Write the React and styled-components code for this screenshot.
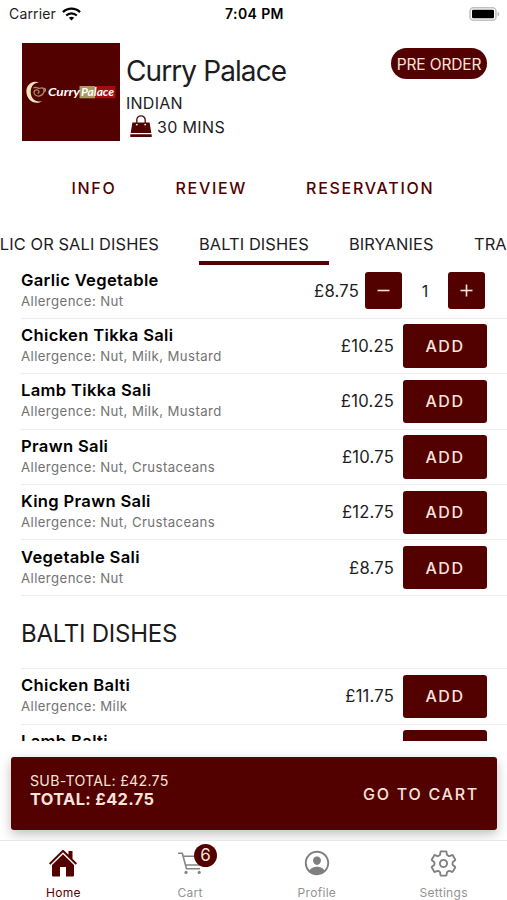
import React from 'react';
import styled, { createGlobalStyle } from 'styled-components';
import { IoPersonCircleOutline, IoSettingsOutline } from 'react-icons/io5';

const maroon = '#520000';
const cream = '#fbe3da';

const GlobalStyle = createGlobalStyle`
  * {
    box-sizing: border-box;
  }
  body {
    margin: 0;
    background: #fff;
    color: #1c1c1e;
    font-family: Inter, "Liberation Sans", sans-serif;
  }
  button {
    font-family: inherit;
    border: none;
    padding: 0;
    cursor: pointer;
  }
`;

const Screen = styled.div`
  display: flex;
  flex-direction: column;
  width: 507px;
  height: 900px;
  overflow: hidden;
  white-space: nowrap;
`;

const StatusBar = styled.div`
  display: grid;
  grid-template-columns: 1fr auto 1fr;
  align-items: center;
  height: 27px;
  padding: 0 7px 0 9px;
  font-size: 14px;
`;

const Carrier = styled.div`
  display: flex;
  align-items: center;
  gap: 6px;
  letter-spacing: 0.15px;
`;

const Clock = styled.div`
  font-weight: 600;
  letter-spacing: 0.4px;
  color: #000;
`;

const Battery = styled.svg`
  justify-self: end;
`;

const Header = styled.header`
  display: flex;
  align-items: flex-start;
  height: 130px;
  padding: 16px 20px 0 22px;
`;

const Info = styled.div`
  flex: 1;
  padding: 11px 0 0 6px;
  font-size: 16px;
  line-height: 24px;
`;

const Title = styled.h1`
  margin: 0 0 2px;
  font-size: 28px;
  line-height: 35px;
  font-weight: 400;
  letter-spacing: -0.9px;
`;

const Cuisine = styled.div`
  letter-spacing: 0.25px;
`;

const Delivery = styled.div`
  display: flex;
  align-items: center;
  gap: 5px;
  height: 23px;
  padding-left: 4px;
  letter-spacing: 0.35px;
`;

const PreOrder = styled.button`
  width: 96px;
  height: 31px;
  margin-top: 5px;
  padding-top: 1px;
  border-radius: 16px;
  background: ${maroon};
  color: ${cream};
  font-size: 15.5px;
  letter-spacing: -0.15px;
`;

const Links = styled.nav`
  display: flex;
  gap: 59px;
  height: 62px;
  padding-left: 71.5px;
  align-items: center;
  color: ${maroon};
  font-size: 16px;
  font-weight: 500;
  letter-spacing: 1.7px;
`;

const Tabs = styled.div`
  display: flex;
  height: 46px;
  gap: 20px;
  margin-left: -21px;
  font-size: 16.4px;
  line-height: 50px;
  letter-spacing: 0.1px;
`;

const Tab = styled.div`
  display: flex;
  flex: none;
  justify-content: ${(p) => (p.$end ? 'flex-end' : 'flex-start')};
  width: ${(p) => p.$width}px;
  padding-right: ${(p) => (p.$end ? 20 : 0)}px;
  border-bottom: 4px solid ${(p) => (p.$active ? maroon : 'transparent')};
`;

const Menu = styled.main`
  height: 476px;
  padding-left: 21px;
  overflow: hidden;
`;

const Group = styled.section`
  margin-top: ${(p) => p.$offset || 0}px;
`;

const GroupTitle = styled.h2`
  height: 73.4px;
  margin: 0;
  border-bottom: 1px solid #ececec;
  font-size: 24px;
  line-height: 75px;
  font-weight: 400;
  letter-spacing: -0.25px;
`;

const Row = styled.div`
  display: flex;
  align-items: center;
  height: 55.4px;
  padding-right: ${(p) => (p.$counted ? 22 : 20)}px;
  border-bottom: 1px solid #ececec;
`;

const Dish = styled.div`
  flex: 1;
  padding-bottom: 2px;
`;

const DishName = styled.div`
  color: #000;
  font-size: 16.6px;
  line-height: 22px;
  font-weight: 600;
  letter-spacing: 0.33px;
`;

const Allergens = styled.div`
  color: #727272;
  font-size: 13.2px;
  line-height: 20px;
  letter-spacing: 0.42px;
`;

const Price = styled.div`
  margin-right: ${(p) => (p.$counted ? 6 : 9)}px;
  font-size: 16.6px;
  letter-spacing: 0.2px;
`;

const AddButton = styled.button`
  width: 84px;
  height: 43.5px;
  border-radius: 3px;
  background: ${maroon};
  color: ${cream};
  font-size: 16px;
  font-weight: 500;
  letter-spacing: 1.6px;
`;

const StepButton = styled.button`
  display: grid;
  place-items: center;
  width: 37px;
  height: 37px;
  border-radius: 3px;
  background: ${maroon};
`;

const Quantity = styled.div`
  width: 46px;
  text-align: center;
  font-size: 16px;
`;

const CartBar = styled.div`
  display: flex;
  flex: none;
  justify-content: space-between;
  height: 73px;
  margin: 16px 10px 10px 11px;
  padding: 0 18px 0 19px;
  border-radius: 3px;
  background: ${maroon};
  color: ${cream};
  box-shadow: 0 4px 12px rgba(0, 0, 0, 0.26);
`;

const Totals = styled.div`
  padding-top: 14px;
  font-size: 14.2px;
  line-height: 19px;
  letter-spacing: 0.25px;
`;

const Total = styled.div`
  font-size: 16.4px;
  font-weight: 700;
  letter-spacing: 0.35px;
`;

const GoToCart = styled.div`
  font-size: 16px;
  line-height: 74px;
  font-weight: 500;
  letter-spacing: 1.75px;
`;

const BottomNav = styled.nav`
  display: grid;
  grid-template-columns: repeat(4, 1fr);
  flex: 1;
  z-index: 1;
  border-top: 1px solid #e8e8e8;
  background: #fff;
`;

const NavItem = styled.div`
  display: flex;
  flex-direction: column;
  align-items: center;
  padding-top: 5px;
  color: ${(p) => (p.$active ? maroon : '#7f7f7f')};
  font-size: 12px;
  letter-spacing: 0.3px;
`;

const NavIcon = styled.div`
  position: relative;
  display: grid;
  place-items: center;
  width: 32px;
  height: 34px;
  margin-bottom: 5px;
`;

const NavLabel = styled.span`
  opacity: ${(p) => (p.$active ? 1 : 0.85)};
`;

const Badge = styled.span`
  position: absolute;
  top: -2px;
  left: 20px;
  width: 23px;
  height: 23px;
  border-radius: 50%;
  background: ${maroon};
  color: ${cream};
  font-size: 17px;
  line-height: 23px;
  text-align: center;
`;

const WifiIcon = () => (
  <svg width="19" height="14" viewBox="0 0 19 14" fill="none" stroke="#000" strokeWidth="2.3">
    <path d="M1 5.1C5.7.5 13.3.5 18 5.1" />
    <path d="M4.2 8.5c3-2.9 7.6-2.9 10.6 0" />
    <path d="M6.8 10.7c1.6-1.4 3.8-1.4 5.4 0L9.5 13.4z" fill="#000" stroke="none" />
  </svg>
);

const BatteryIcon = () => (
  <Battery width="31" height="14" viewBox="0 0 31 14">
    <rect x="1" y=".8" width="26" height="12.4" rx="3.5" fill="#fff" stroke="#c2c2c2" strokeWidth="1.6" />
    <rect x="3" y="2.7" width="22" height="8.6" rx="1.2" fill="#000" />
    <path d="M28.7 4.7c2 .8 2 3.8 0 4.6z" fill="#b5b5b5" />
  </Battery>
);

const Logo = () => (
  <svg width="98" height="98" viewBox="0 0 98 98">
    <rect width="98" height="98" fill={maroon} />
    <path d="M17.5 40C10 36 4 42.500 4.400 49c.4 8 8 13.500 15.800 9.200-7.300 1.600-11.300-3.200-11.500-9 0-5.500 3.300-10.400 8.800-9.200z" fill="#efe3c0" />
    <path d="M11.500 45c2.500-2 4.500 1 7 .2 2.700-1 4.200 1 3.200 4.300-1.500 4.200-7.500 4.800-9.300 1.500-1.200-2.500.8-4.800 3.300-4 2 .8 1.500 3.200-.2 3.300M21.500 45.500c3-.7 2.500 3-.3 4" fill="none" stroke="#a88a62" strokeWidth="1.300" />
    <rect x="57.500" y="43" width="15.500" height="12.300" fill="#aa9a61" />
    <rect x="73" y="43" width="20.500" height="12.300" fill="#a30d12" />
    <text x="26" y="53" textLength="32" lengthAdjust="spacingAndGlyphs" fill="#fff" fontFamily="Lato, sans-serif" fontSize="10.500" fontWeight="700" fontStyle="italic">Curry</text>
    <text x="59" y="53" textLength="33" lengthAdjust="spacingAndGlyphs" fill="#fff" fontFamily="Lato, sans-serif" fontSize="10.500" fontWeight="700" fontStyle="italic">Palace</text>
  </svg>
);

const BagIcon = () => (
  <svg width="22" height="24" viewBox="0 0 22 24" fill={maroon}>
    <path d="M2.400 7.500h17.200l1.700 10.500H.7zM.3 19.200h21.400V22H.3z" />
    <path d="M6.800 9.500V5a4.200 4.200 0 0 1 8.400 0v4.500" fill="none" stroke={maroon} strokeWidth="1.300" />
    <circle cx="6.800" cy="9.600" r=".9" fill="#fff" />
    <circle cx="15.200" cy="9.600" r=".9" fill="#fff" />
  </svg>
);

const HomeIcon = () => (
  <svg width="30" height="28" viewBox="0 0 30 28" fill={maroon}>
    <path d="M1 14.300 14.200 1.200a1.200 1.200 0 0 1 1.600 0L20.500 5.800V2h4v7.800L29 14.300l-1.300 1.400L15 3.200 2.300 15.700z" />
    <path d="M15 5.200 26 16v10.500a1 1 0 0 1-1 1h-7V18h-6v9.500H5a1 1 0 0 1-1-1V16z" />
  </svg>
);

const CartIcon = () => (
  <svg width="28" height="28" viewBox="0 0 28 28" fill="none" stroke="#858585" strokeWidth="1.600">
    <path d="M2 4.200h4.300l4.200 15.600H24" />
    <path d="M7.300 7.200h18.500l-2.300 8.800H9.600" />
    <circle cx="10" cy="23.400" r="1.600" fill="#858585" stroke="none" />
    <circle cx="23.200" cy="23.400" r="1.600" fill="#858585" stroke="none" />
  </svg>
);

const StepIcon = ({ plus }) => (
  <svg width="13" height="13" viewBox="0 0 13 13" stroke={cream} strokeWidth="1.600">
    <path d="M.5 6.500h12" />
    {plus && <path d="M6.500.5v12" />}
  </svg>
);

const saliDishes = [
  { name: 'Garlic Vegetable', allergens: 'Nut', price: '8.75', quantity: 1 },
  { name: 'Chicken Tikka Sali', allergens: 'Nut, Milk, Mustard', price: '10.25' },
  { name: 'Lamb Tikka Sali', allergens: 'Nut, Milk, Mustard', price: '10.25' },
  { name: 'Prawn Sali', allergens: 'Nut, Crustaceans', price: '10.75' },
  { name: 'King Prawn Sali', allergens: 'Nut, Crustaceans', price: '12.75' },
  { name: 'Vegetable Sali', allergens: 'Nut', price: '8.75' },
];

const baltiDishes = [
  { name: 'Chicken Balti', allergens: 'Milk', price: '11.75' },
  { name: 'Lamb Balti' },
];

function DishRow({ dish }) {
  const counted = dish.quantity > 0;
  return (
    <Row $counted={counted}>
      <Dish>
        <DishName>{dish.name}</DishName>
        <Allergens>{dish.allergens ? `Allergence: ${dish.allergens}` : '\u00a0'}</Allergens>
      </Dish>
      {dish.price && <Price $counted={counted}>£{dish.price}</Price>}
      {counted ? (
        <>
          <StepButton><StepIcon /></StepButton>
          <Quantity>{dish.quantity}</Quantity>
          <StepButton><StepIcon plus /></StepButton>
        </>
      ) : (
        <AddButton>{dish.price && 'ADD'}</AddButton>
      )}
    </Row>
  );
}

export default function App() {
  return (
    <Screen>
      <GlobalStyle />
      <StatusBar>
        <Carrier>Carrier <WifiIcon /></Carrier>
        <Clock>7:04 PM</Clock>
        <BatteryIcon />
      </StatusBar>
      <Header>
        <Logo />
        <Info>
          <Title>Curry Palace</Title>
          <Cuisine>INDIAN</Cuisine>
          <Delivery><BagIcon />30 MINS</Delivery>
        </Info>
        <PreOrder>PRE ORDER</PreOrder>
      </Header>
      <Links>
        <span>INFO</span>
        <span>REVIEW</span>
        <span>RESERVATION</span>
      </Links>
      <Tabs>
        <Tab $width={200} $end>LIC OR SALI DISHES</Tab>
        <Tab $width={130} $active>BALTI DISHES</Tab>
        <Tab $width={105}>BIRYANIES</Tab>
        <Tab $width={80}>TRA</Tab>
      </Tabs>
      <Menu>
        <Group $offset={-1.5}>
          {saliDishes.map((dish) => <DishRow key={dish.name} dish={dish} />)}
        </Group>
        <Group>
          <GroupTitle>BALTI DISHES</GroupTitle>
          {baltiDishes.map((dish) => <DishRow key={dish.name} dish={dish} />)}
        </Group>
      </Menu>
      <CartBar>
        <Totals>
          <div>SUB-TOTAL: £42.75</div>
          <Total>TOTAL: £42.75</Total>
        </Totals>
        <GoToCart>GO TO CART</GoToCart>
      </CartBar>
      <BottomNav>
        <NavItem $active>
          <NavIcon><HomeIcon /></NavIcon>
          <NavLabel $active>Home</NavLabel>
        </NavItem>
        <NavItem>
          <NavIcon><CartIcon /><Badge>6</Badge></NavIcon>
          <NavLabel>Cart</NavLabel>
        </NavItem>
        <NavItem>
          <NavIcon><IoPersonCircleOutline size={30} /></NavIcon>
          <NavLabel>Profile</NavLabel>
        </NavItem>
        <NavItem>
          <NavIcon><IoSettingsOutline size={29} /></NavIcon>
          <NavLabel>Settings</NavLabel>
        </NavItem>
      </BottomNav>
    </Screen>
  );
}
